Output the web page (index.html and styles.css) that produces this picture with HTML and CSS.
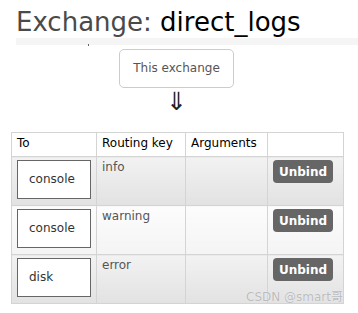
FILE: index.html
```html
<!DOCTYPE html>
<html lang="en">

<head>
    <meta charset="UTF-8">
    <title>Exchange: direct_logs</title>
    <link rel="stylesheet" href="styles.css">
</head>

<body>
    <h1>Exchange: <b>direct_logs</b></h1>
    <div class="strip"><span class="dot"></span></div>

    <div class="bindings">
        <div class="this-exchange">This exchange</div>
        <div class="arrow">&#8659;</div>

        <table class="list">
            <thead>
                <tr>
                    <th class="c-to">To</th>
                    <th class="c-key">Routing key</th>
                    <th class="c-args">Arguments</th>
                    <th class="c-act"></th>
                </tr>
            </thead>
            <tbody>
                <tr class="alt1">
                    <td><span class="queue">console</span></td>
                    <td>info</td>
                    <td></td>
                    <td><button class="unbind">Unbind</button></td>
                </tr>
                <tr class="alt2">
                    <td><span class="queue">console</span></td>
                    <td>warning</td>
                    <td></td>
                    <td><button class="unbind">Unbind</button></td>
                </tr>
                <tr class="alt1">
                    <td><span class="queue">disk</span></td>
                    <td>error</td>
                    <td></td>
                    <td><button class="unbind">Unbind</button></td>
                </tr>
            </tbody>
        </table>
        <div class="mark">CSDN @smart哥</div>
    </div>
</body>

</html>
```

FILE: styles.css
```css
body {
    font-family: "DejaVu Sans", Verdana, sans-serif;
    margin: 0;
    padding: 0;
    background-color: #fff;
    color: #444;
}

h1 {
    margin: 0;
    padding: 6px 0 0 16px;
    font-size: 26px;
    font-weight: normal;
    line-height: 32px;
    color: #4a4a4a;
}

h1 b {
    font-weight: normal;
    color: #000;
}

.strip {
    margin-left: 16px;
    height: 7px;
    background-color: #f5f5f5;
    position: relative;
}

.dot {
    position: absolute;
    left: 72px;
    bottom: -1px;
    width: 1px;
    height: 2px;
    background-color: #666;
}

.bindings {
    position: relative;
    padding: 4px 14px 0 11px;
}

.this-exchange {
    width: 113px;
    height: 37px;
    margin: 0 0 0 108px;
    border: 1px solid #ccc;
    border-radius: 5px;
    font-size: 12px;
    line-height: 37px;
    text-align: center;
    color: #555;
}

.arrow {
    margin-left: 108px;
    width: 115px;
    height: 44px;
    text-align: center;
    font-size: 25px;
    line-height: 28px;
    color: #222;
}

table.list {
    width: 333px;
    border-collapse: collapse;
    font-size: 12px;
}

table.list th,
table.list td {
    border: 1px solid #d4d4d4;
    padding: 3px 5px;
    text-align: left;
    vertical-align: top;
}

table.list th {
    font-weight: normal;
    color: #000;
    background-color: #fff;
    height: 17px;
}

table.list td {
    color: #555;
    height: 42px;
}

.c-to {
    width: 74px;
}

.c-key {
    width: 78px;
}

.c-args {
    width: 71px;
}

tr.alt1 td {
    background: linear-gradient(#f2f2f2, #e2e2e2);
}

tr.alt2 td {
    background: linear-gradient(#fcfcfc, #f4f4f4);
}

.queue {
    display: block;
    width: 61px;
    height: 37px;
    padding-left: 11px;
    border: 1px solid #666;
    background-color: #fff;
    color: #333;
    font-size: 12px;
    line-height: 37px;
}

.unbind {
    width: 60px;
    height: 23px;
    padding: 0;
    border: 0;
    border-radius: 4px;
    background-color: #666;
    color: #fff;
    font-family: "DejaVu Sans", Verdana, sans-serif;
    font-size: 12px;
    font-weight: bold;
}

.mark {
    position: absolute;
    right: 15px;
    bottom: 0;
    font-size: 12px;
    color: #bbb;
    font-family: "DejaVu Sans", "Noto Sans CJK SC", sans-serif;
    text-shadow: 0 0 1px #fff;
}
```
